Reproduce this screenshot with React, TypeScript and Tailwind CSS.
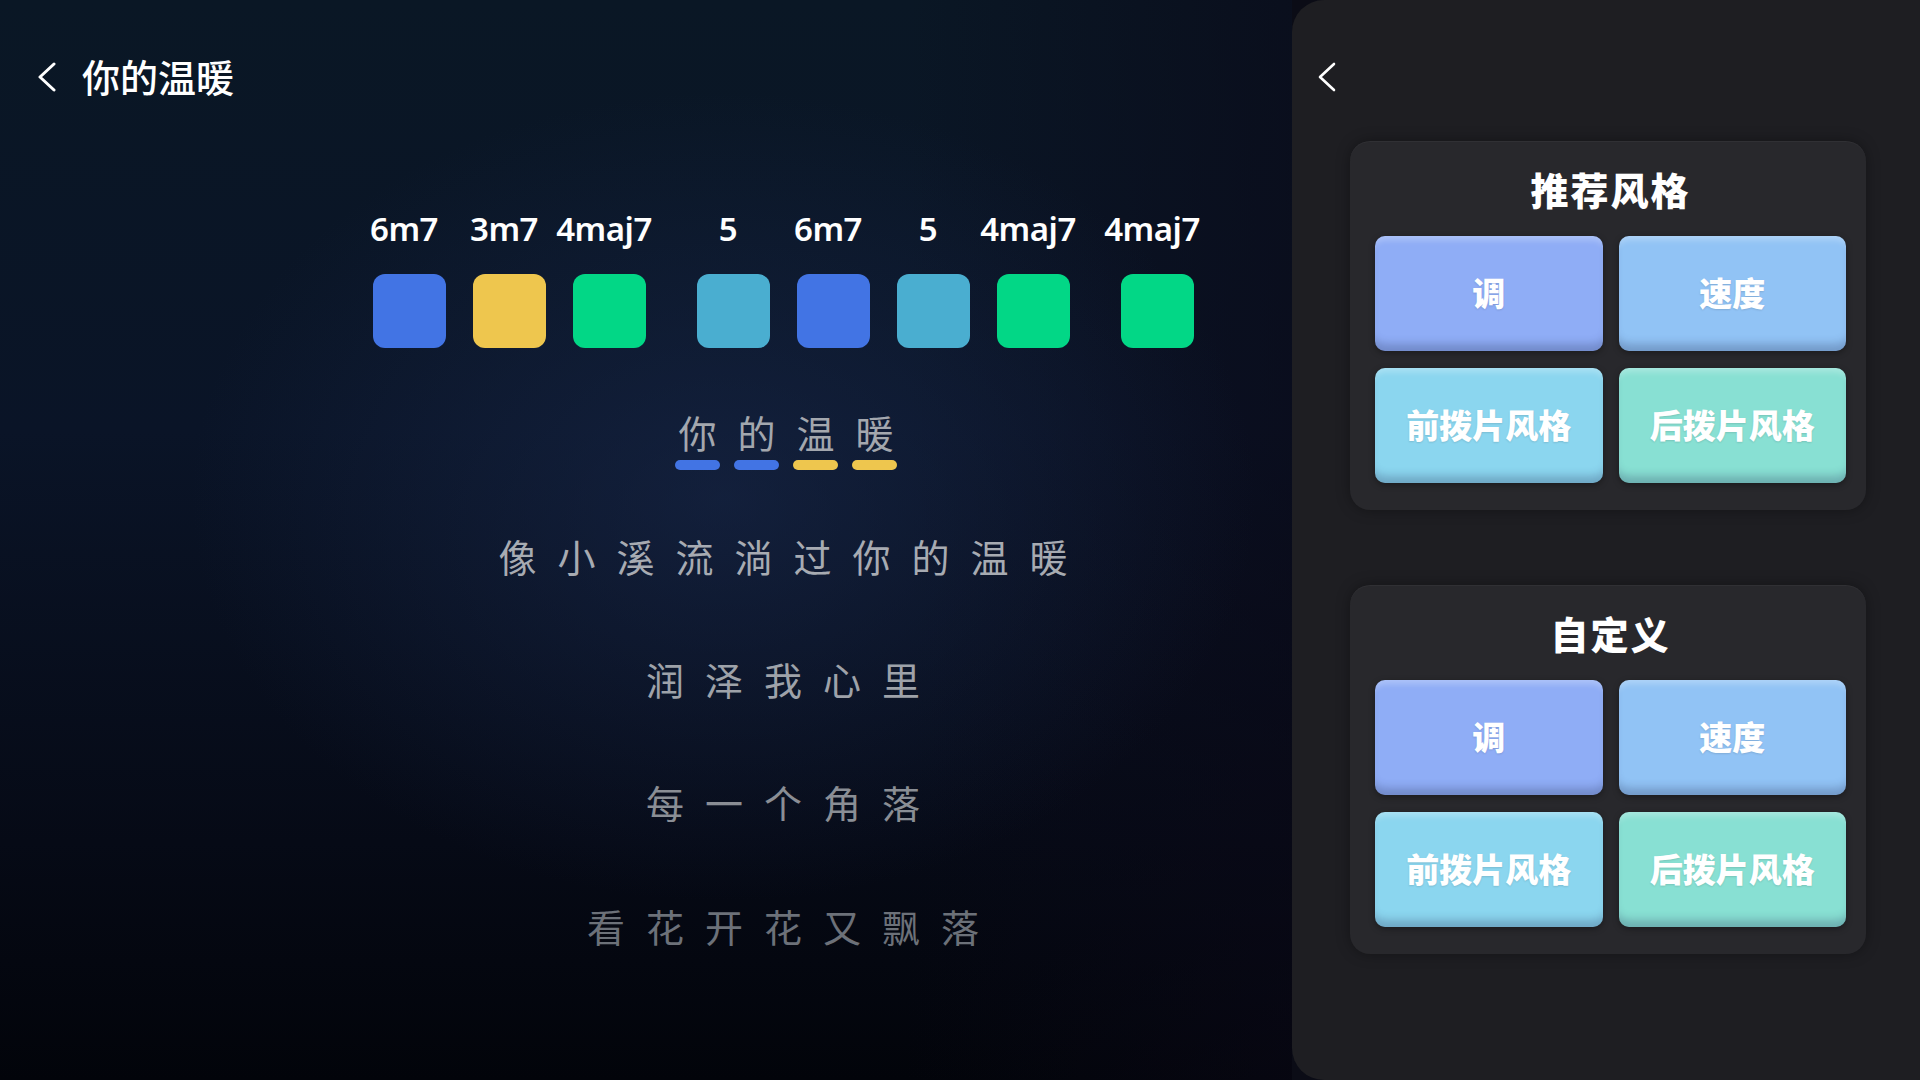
import React from "react";

const FONT = "font-['Noto_Sans','Noto_Sans_CJK_SC',sans-serif]";

function Chevron({ stroke = 3 }: { stroke?: number }) {
  return (
    <svg width="20" height="30" viewBox="0 0 20 30" fill="none">
      <polyline
        points="17,2 3,15 17,28"
        stroke="white"
        strokeWidth={stroke}
        strokeLinecap="round"
        strokeLinejoin="round"
      />
    </svg>
  );
}

const chords: { n: string; c: string; extra?: boolean }[] = [
  { n: "6m7", c: "bg-[#4274e4]" },
  { n: "3m7", c: "bg-[#eec64e]" },
  { n: "4maj7", c: "bg-[#02d786]" },
  { n: "5", c: "bg-[#4aaed0]", extra: true },
  { n: "6m7", c: "bg-[#4274e4]" },
  { n: "5", c: "bg-[#4aaed0]" },
  { n: "4maj7", c: "bg-[#02d786]" },
  { n: "4maj7", c: "bg-[#02d786]", extra: true },
];

const first = [
  { ch: "你", c: "bg-[#4274e4]" },
  { ch: "的", c: "bg-[#4274e4]" },
  { ch: "温", c: "bg-[#eec64e]" },
  { ch: "暖", c: "bg-[#eec64e]" },
];

function Line({ text, color, mt }: { text: string; color: string; mt: string }) {
  return (
    <div className={`flex gap-[21px] text-[38px] leading-none ${color} ${mt}`}>
      {Array.from(text).map((ch, i) => (
        <span key={i} className="w-[38px] text-center">
          {ch}
        </span>
      ))}
    </div>
  );
}

function Btn({ label, color }: { label: string; color: string }) {
  return (
    <div
      className={`h-[115px] rounded-[10px] flex items-center justify-center text-white text-[33px] font-black leading-none ${color} shadow-[inset_0_8px_6px_-4px_rgba(255,255,255,0.28),inset_0_-12px_8px_-5px_rgba(40,50,90,0.28),0_2px_6px_rgba(0,0,0,0.35)] [text-shadow:0_1px_2px_rgba(0,0,0,0.12)]`}
    >
      {label}
    </div>
  );
}

function Card({ title, mt }: { title: string; mt: string }) {
  return (
    <div
      className={`w-[516px] rounded-[20px] bg-[#28282c] pl-[25px] pr-[20px] pt-[30px] pb-[27px] shadow-[0_0_14px_rgba(0,0,0,0.35),inset_0_1px_0_rgba(255,255,255,0.04)] ${mt}`}
    >
      <div className="text-center text-white text-[38px] font-black leading-none tracking-[2px] h-[38px]">
        {title}
      </div>
      <div className="grid grid-cols-2 gap-x-[16px] gap-y-[17px] mt-[27px]">
        <Btn label="调" color="bg-[#8fadf6]" />
        <Btn label="速度" color="bg-[#91c3f5]" />
        <Btn label="前拨片风格" color="bg-[#8bd6ef]" />
        <Btn label="后拨片风格" color="bg-[#88e0d3]" />
      </div>
    </div>
  );
}

export default function App() {
  return (
    <div
      className={`w-[1920px] h-[1080px] flex overflow-hidden bg-[#0b0c16] ${FONT}`}
    >
      {/* Left area */}
      <div className="w-[1292px] h-full flex flex-col bg-[radial-gradient(ellipse_55%_50%_at_56%_46%,rgba(26,42,78,0.55),transparent_75%),linear-gradient(90deg,transparent_70%,rgba(10,8,22,0.55)_100%),linear-gradient(180deg,#0a1725_0%,#0a1427_40%,#060a16_78%,#02040a_100%)]">
        <div className="mt-[57px] h-[40px] flex items-center pl-[37px]">
          <Chevron stroke={3} />
          <span className="ml-[25px] text-white text-[38px] font-medium leading-none">
            你的温暖
          </span>
        </div>

        <div className="pl-[274px] flex flex-col items-center">
          {/* chords */}
          <div className="flex gap-[27px] mt-[115px]">
            {chords.map((c, i) => (
              <div
                key={i}
                className={`w-[73px] flex flex-col items-center ${c.extra ? "ml-[24px]" : ""}`}
              >
                <span className="mr-[10px] whitespace-nowrap text-white text-[33px] font-semibold leading-[34px] h-[34px] tracking-[-0.5px] font-['Noto_Sans',sans-serif]">
                  {c.n}
                </span>
                <div className={`mt-[28px] w-[73px] h-[74px] rounded-[12px] ${c.c}`} />
              </div>
            ))}
          </div>

          {/* first lyric line with underlines */}
          <div className="flex gap-[14px] mt-[66px] ml-[6px] text-[#a3a7ae]">
            {first.map((f, i) => (
              <div key={i} className="w-[45px] flex flex-col items-center">
                <span className="text-[38px] leading-none h-[38px]">{f.ch}</span>
                <div className={`mt-[8px] w-[45px] h-[10px] rounded-full ${f.c}`} />
              </div>
            ))}
          </div>

          <Line text="像小溪流淌过你的温暖" color="text-[#a7abb2]" mt="mt-[68px]" />
          <Line text="润泽我心里" color="text-[#9ea2a9]" mt="mt-[85px]" />
          <Line text="每一个角落" color="text-[#8a8e95]" mt="mt-[85px]" />
          <Line text="看花开花又飘落" color="text-[#6c7179]" mt="mt-[86px]" />
        </div>
      </div>

      {/* Right panel */}
      <div className="w-[628px] h-full rounded-l-[32px] bg-[#1e1e22] flex flex-col pt-[63px]">
        <div className="pl-[25px] h-[28px] flex items-center">
          <Chevron stroke={2.6} />
        </div>
        <div className="pl-[58px] flex flex-col">
          <Card title="推荐风格" mt="mt-[50px]" />
          <Card title="自定义" mt="mt-[75px]" />
        </div>
      </div>
    </div>
  );
}
